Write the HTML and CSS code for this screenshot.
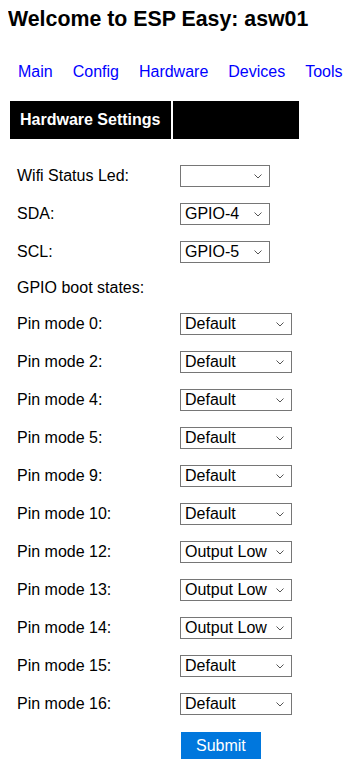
FILE: index.html
```html
<!DOCTYPE html>
<html lang="en">

<head>
    <meta charset="UTF-8">
    <meta name="viewport" content="width=device-width, initial-scale=1.0">
    <title>ESP Easy: asw01</title>
    <link rel="stylesheet" href="styles.css">
</head>

<body>
    <h1>Welcome to ESP Easy: asw01</h1>

    <div class="menu">
        <a class="button-menu" href="#">Main</a>
        <a class="button-menu" href="#">Config</a>
        <a class="button-menu" href="#">Hardware</a>
        <a class="button-menu" href="#">Devices</a>
        <a class="button-menu" href="#">Tools</a>
    </div>

    <form>
        <table class="settings">
            <tr>
                <th class="col-label">Hardware Settings</th>
                <th></th>
            </tr>
            <tr class="spacer">
                <td></td>
                <td></td>
            </tr>
            <tr>
                <td>Wifi Status Led:</td>
                <td><select class="sel-short"><option></option></select></td>
            </tr>
            <tr>
                <td>SDA:</td>
                <td><select class="sel-short"><option>GPIO-4</option></select></td>
            </tr>
            <tr>
                <td>SCL:</td>
                <td><select class="sel-short"><option>GPIO-5</option></select></td>
            </tr>
            <tr>
                <td>GPIO boot states:</td>
                <td></td>
            </tr>
            <tr>
                <td>Pin mode 0:</td>
                <td><select class="sel-wide"><option>Default</option></select></td>
            </tr>
            <tr>
                <td>Pin mode 2:</td>
                <td><select class="sel-wide"><option>Default</option></select></td>
            </tr>
            <tr>
                <td>Pin mode 4:</td>
                <td><select class="sel-wide"><option>Default</option></select></td>
            </tr>
            <tr>
                <td>Pin mode 5:</td>
                <td><select class="sel-wide"><option>Default</option></select></td>
            </tr>
            <tr>
                <td>Pin mode 9:</td>
                <td><select class="sel-wide"><option>Default</option></select></td>
            </tr>
            <tr>
                <td>Pin mode 10:</td>
                <td><select class="sel-wide"><option>Default</option></select></td>
            </tr>
            <tr>
                <td>Pin mode 12:</td>
                <td><select class="sel-wide"><option>Output Low</option></select></td>
            </tr>
            <tr>
                <td>Pin mode 13:</td>
                <td><select class="sel-wide"><option>Output Low</option></select></td>
            </tr>
            <tr>
                <td>Pin mode 14:</td>
                <td><select class="sel-wide"><option>Output Low</option></select></td>
            </tr>
            <tr>
                <td>Pin mode 15:</td>
                <td><select class="sel-wide"><option>Default</option></select></td>
            </tr>
            <tr>
                <td>Pin mode 16:</td>
                <td><select class="sel-wide"><option>Default</option></select></td>
            </tr>
            <tr>
                <td></td>
                <td><button type="button" class="button-link">Submit</button></td>
            </tr>
        </table>
    </form>
</body>

</html>
```

FILE: styles.css
```css
* {
    font-family: "Liberation Sans", Arial, sans-serif;
    font-size: 16px;
}

body {
    margin: 8px;
    color: black;
}

h1 {
    font-size: 21.33px;
    font-weight: bold;
    line-height: 22px;
    margin: 0;
}

.menu {
    display: flex;
    gap: 20px;
    margin: 33px 0 18px 10px;
    line-height: 18px;
}

.button-menu {
    color: #0000ff;
    text-decoration: none;
}

.settings {
    border-spacing: 2px;
    color: black;
}

th {
    padding: 10px;
    background-color: black;
    color: #ffffff;
    font-weight: bold;
    text-align: left;
    line-height: 18px;
}

th.col-label {
    width: 141px;
}

td {
    padding: 7px;
    line-height: 18px;
}

.spacer td {
    padding: 0;
    line-height: 0;
    height: 15px;
}

select {
    appearance: none;
    -webkit-appearance: none;
    display: block;
    height: 22px;
    margin: 0;
    padding: 0 16px 0 4px;
    border: 1px solid #767676;
    border-radius: 0;
    background-color: #ffffff;
    background-image: url("data:image/svg+xml;utf8,<svg xmlns='http://www.w3.org/2000/svg' width='8' height='5' viewBox='0 0 8 5'><path d='M0.5 0.5 L4 4 L7.5 0.5' fill='none' stroke='%23555' stroke-width='1'/></svg>");
    background-repeat: no-repeat;
    background-position: right 7px center;
    color: black;
    line-height: 20px;
}

.sel-short {
    width: 90px;
}

.sel-wide {
    width: 112px;
}

.button-link {
    display: block;
    padding: 5px 15px;
    margin: 0;
    background-color: #0077dd;
    color: #ffffff;
    border: solid 1px #ffffff;
    line-height: 17px;
    cursor: pointer;
}
```
